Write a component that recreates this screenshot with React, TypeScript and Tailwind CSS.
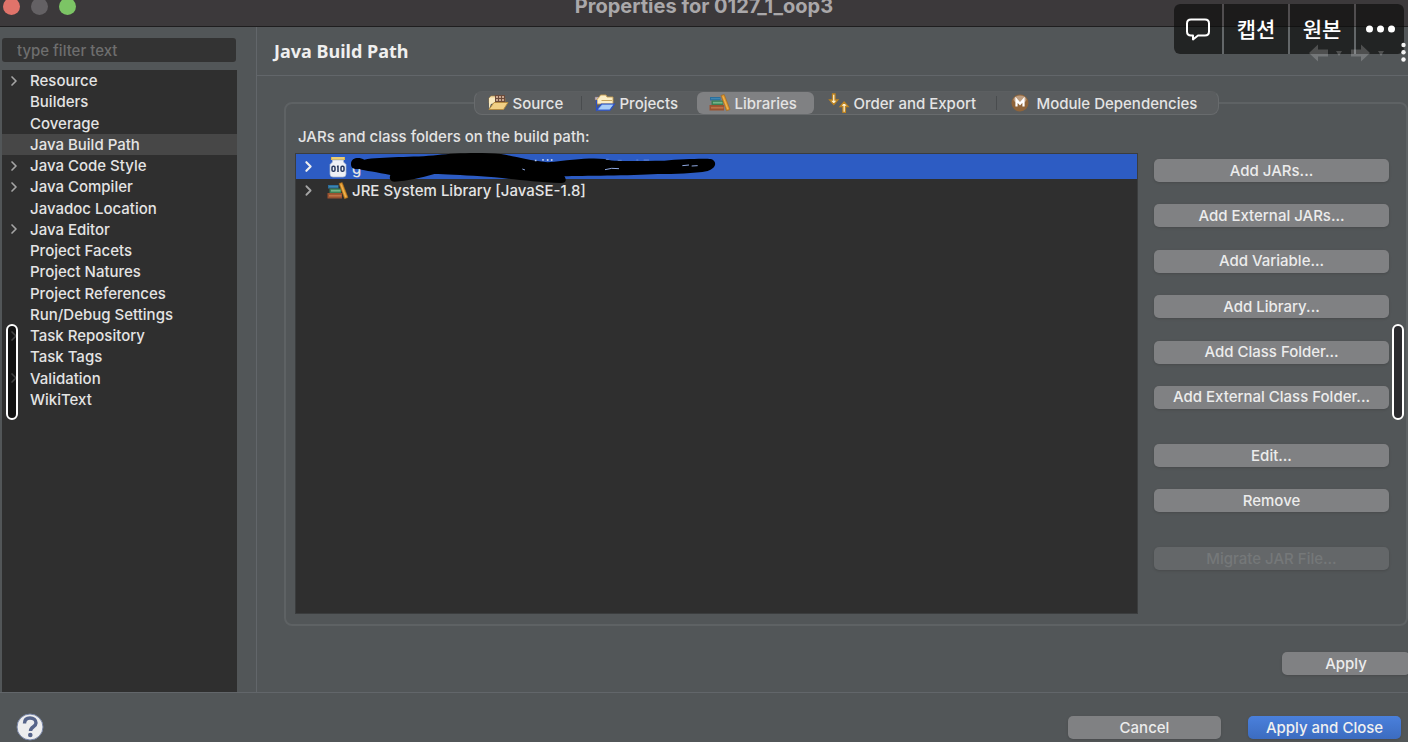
import React from "react";
import { ChevronRight } from "lucide-react";

const treeItems: { label: string; expandable?: boolean; selected?: boolean }[] = [
  { label: "Resource", expandable: true },
  { label: "Builders" },
  { label: "Coverage" },
  { label: "Java Build Path", selected: true },
  { label: "Java Code Style", expandable: true },
  { label: "Java Compiler", expandable: true },
  { label: "Javadoc Location" },
  { label: "Java Editor", expandable: true },
  { label: "Project Facets" },
  { label: "Project Natures" },
  { label: "Project References" },
  { label: "Run/Debug Settings" },
  { label: "Task Repository", expandable: true },
  { label: "Task Tags" },
  { label: "Validation", expandable: true },
  { label: "WikiText" },
];

function SourceIcon() {
  return (
    <svg width="22" height="18" viewBox="0 0 22 18" aria-hidden="true">
      <path d="M2 4 L4 2 H8 L9 4 H18 V9 H2Z" fill="#f3dca8" stroke="#a8813f" strokeWidth="0.6" />
      <path d="M8 1h10v8H8z" fill="#6b4a3a" />
      <path d="M9 2h2v2H9zM12 2h2v2h-2zM15 2h2v2h-2zM9 5h2v2H9zM12 5h2v2h-2zM15 5h2v2h-2z" fill="#c7a58d" />
      <path d="M2 4h6v5l-4 1-2 5z" fill="#f9e9bf" />
      <path d="M2 15.500 L7 8.500 H21 L16.500 15.500Z" fill="#f1cf85" stroke="#b58a3c" strokeWidth="0.900" />
    </svg>
  );
}

function ProjectsIcon() {
  return (
    <svg width="22" height="18" viewBox="0 0 22 18" aria-hidden="true">
      <path d="M1 3h5v3H1z" fill="#b9b4c4" stroke="#8a6d6d" strokeWidth="0.500" />
      <path d="M3 5 L5 3.500 6.500 1 H12 L13 3 H19 V10 H3Z" fill="#fbeec6" stroke="#c39a4f" strokeWidth="0.900" />
      <path d="M7.500 6.500H18" stroke="#c9a45c" strokeWidth="1" />
      <path d="M2.500 6v10 L7.500 10 H20.500 L16 16.200H2.500" fill="#8db9f3" stroke="#2c50c4" strokeWidth="1.200" />
      <path d="M5 15.200 L8.500 11 H18.500 L15.500 15.200Z" fill="#a9cdf8" />
    </svg>
  );
}

function LibraryIcon() {
  return (
    <svg width="22" height="18" viewBox="0 0 22 18" aria-hidden="true">
      <path d="M1 3h10.500v3.500H1z" fill="#2a6f9d" />
      <path d="M2 4.700h9" stroke="#4b93bd" strokeWidth="0.800" />
      <path d="M2.500 6.500H14V11H2.500z" fill="#3b7f55" />
      <path d="M4 8.700h9.500" stroke="#74b489" strokeWidth="1.800" />
      <path d="M0.500 11H15v5.500H0.500z" fill="#9a5230" />
      <path d="M2 13.700h12.500" stroke="#bd7448" strokeWidth="1.800" />
      <path d="M12 1.500 L15.200 0.500 L21 15.500 L17.600 16.700Z" fill="#e0982f" stroke="#9c6319" strokeWidth="0.600" />
      <path d="M14 2.500 L18.800 15" stroke="#f0b95a" strokeWidth="0.900" />
    </svg>
  );
}

function OrderIcon() {
  return (
    <svg width="22" height="20" viewBox="0 0 22 20" aria-hidden="true">
      <path d="M4.500 1 H7 V7 H9.800 L5.750 11.500 L1.700 7 H4.500Z" fill="#fff4d4" stroke="#bd8320" strokeWidth="1.300" />
      <path d="M14.900 19.300 H17.400 V13.500 H20.200 L16.100 9 L12.100 13.500 H14.900Z" fill="#fff4d4" stroke="#bd8320" strokeWidth="1.300" />
    </svg>
  );
}

function ModuleIcon() {
  return (
    <svg width="18" height="18" viewBox="0 0 18 18" aria-hidden="true">
      <circle cx="9" cy="9" r="8.500" fill="#8f643a" />
      <ellipse cx="9" cy="5.500" rx="6.500" ry="4" fill="#bd9d80" />
      <path d="M5.500 12.500V5.800L9 9.800l3.500-4v6.700" fill="none" stroke="#fff" strokeWidth="2.200" />
    </svg>
  );
}

function JarIcon() {
  return (
    <svg width="20" height="22" viewBox="0 0 20 22" aria-hidden="true">
      <path d="M3 1h14v3H3z" fill="#dcb64f" />
      <path d="M4 2h12" stroke="#f7e39c" />
      <path d="M4.500 4h11v2l2.500 2.500V18q0 3-3 3H5q-3 0-3-3V8.500L4.500 6z" fill="#eef1f6" stroke="#a9b7cf" strokeWidth="0.700" />
      <rect x="4" y="10.300" width="3" height="5" rx="1.300" fill="none" stroke="#26375c" strokeWidth="1.500" />
      <path d="M10 9.500V16M8.900 10.500h1" stroke="#26375c" strokeWidth="1.500" />
      <rect x="13" y="10.300" width="3" height="5" rx="1.300" fill="none" stroke="#26375c" strokeWidth="1.500" />
    </svg>
  );
}

function Scribble() {
  return (
    <svg className="pointer-events-none absolute -top-px left-[55px] z-10" width="368" height="31" viewBox="210 102 1104 93" aria-hidden="true">
      <path
        d="M210 135C210 115 235 114 250 122C300 112 400 116 470 108C520 102 600 100 660 105C700 112 740 124 800 130C870 122 930 115 970 120C1000 130 1080 125 1150 125C1200 120 1270 118 1290 120C1308 126 1308 146 1280 156C1240 164 1180 165 1130 165C1050 170 900 170 850 172C858 184 855 192 840 192C740 188 660 175 600 172C540 168 490 165 460 165C420 176 380 186 340 188C325 186 325 175 328 168C290 160 250 155 235 150C215 152 210 145 210 135Z"
        fill="#000"
      />
      <path d="M764 122v5M786 120v5M800 120v6M812 120v6" stroke="#b9c9ee" strokeWidth="5" />
      <path d="M724 150l8 3M972 152l20-4 22 1M1204 140l20-2M1232 141l18-1" stroke="#8fa9e2" strokeWidth="3" />
      <path d="M975 121h8M1010 124h12M1066 123h6M1088 123h16" stroke="#7f9bdc" strokeWidth="2" />
    </svg>
  );
}

const buttonBase = "flex h-[23px] items-center justify-center whitespace-nowrap rounded-[5px] pb-px text-[15px] leading-none font-medium shadow-sm";

function PushButton({ children, className = "", disabled = false }: { children: React.ReactNode; className?: string; disabled?: boolean }) {
  return (
    <button type="button" disabled={disabled} className={`${buttonBase} ${disabled ? "bg-[#646769] text-[#757879]" : "bg-[#808183] text-[#ececec]"} ${className}`}>
      {children}
    </button>
  );
}

function Tab({ icon, label, className, selected = false }: { icon: React.ReactNode; label: string; className: string; selected?: boolean }) {
  return (
    <button type="button" role="tab" aria-selected={selected} className={`flex items-center whitespace-nowrap ${selected ? "rounded-md bg-[#808183]" : ""} ${className}`}>
      {icon}
      {label}
    </button>
  );
}

function NavArrow({ back = false }: { back?: boolean }) {
  return (
    <button type="button" aria-label={back ? "Back" : "Forward"} className="flex items-center gap-2 text-white/20">
      <svg width="19" height="18" viewBox="0 0 19 18" className={back ? "" : "rotate-180"} aria-hidden="true">
        <path d="M0 9L9 0.500V5.500H19V12.500H9V17.500Z" fill="currentColor" />
      </svg>
      <svg width="6" height="5" viewBox="0 0 6 5" aria-hidden="true">
        <path d="M0 0h6L3 5z" fill="currentColor" />
      </svg>
    </button>
  );
}

export default function App() {
  return (
    <div className="relative flex min-h-screen flex-col overflow-hidden bg-[#525658] font-['Inter',sans-serif] text-[15px] leading-none font-medium text-[#e4e4e4]">
      <header className="relative flex h-[27px] shrink-0 justify-center border-b border-[#1f1e1f] bg-[#3c393b]">
        <div className="absolute -top-0.5 left-[3px] flex gap-[11px]">
          <button type="button" aria-label="Close window" className="size-[17px] rounded-full bg-[#e0736a]" />
          <button type="button" aria-label="Minimize window" className="size-[17px] rounded-full bg-[#646164]" />
          <button type="button" aria-label="Zoom window" className="size-[17px] rounded-full bg-[#7cc465]" />
        </div>
        <h1 className="-mt-1 text-xl leading-5 font-bold text-[#aaa8aa]">Properties for 0127_1_oop3</h1>
      </header>

      <div className="flex flex-1">
        <aside className="flex w-[257px] shrink-0 flex-col border-r border-[#62666a] pr-[19px] pl-0.5">
          <input
            type="text"
            aria-label="Filter"
            placeholder="type filter text"
            className="mt-[11px] mr-px h-6 rounded-[3px] bg-[#333333] px-[15px] outline-none placeholder:text-[#6e6e6e]"
          />
          <nav className="mt-2 flex-1 bg-[#2f2f2f]">
            <ul className="grid h-[340px] auto-rows-fr">
              {treeItems.map((item) => (
                <li key={item.label} className={`flex items-center ${item.selected ? "bg-[#474747]" : ""}`}>
                  <span className="flex w-7 justify-center pr-1">
                    {item.expandable && <ChevronRight size={16} strokeWidth={2.5} className="text-[#a5a5a5]" />}
                  </span>
                  <a href="#" className="whitespace-nowrap">{item.label}</a>
                </li>
              ))}
            </ul>
          </nav>
        </aside>

        <main className="flex min-w-0 flex-1 flex-col">
          <div className="flex h-[49px] shrink-0 items-center justify-between border-b border-[#62666a] pr-6 pl-[17px]">
            <h2 className="font-['Noto_Sans',sans-serif] text-lg font-bold text-[#efefef]">Java Build Path</h2>
            <div className="relative z-20 flex gap-[9px] pt-1">
              <NavArrow back />
              <NavArrow />
            </div>
          </div>

          <section className="mt-[26px] ml-[27px] flex flex-1 flex-col rounded-lg border-2 border-[#5e6264]">
            <div role="tablist" className="z-10 -mt-[13px] flex h-6 self-center rounded-lg border border-[#686b6d] border-t-[#5c5f61] bg-[#5a5d5f]">
              <Tab icon={<SourceIcon />} label="Source" className="w-[106px] gap-1 pl-3" />
              <span className="my-1 w-px bg-[#494c4e]" />
              <Tab icon={<ProjectsIcon />} label="Projects" className="w-[115px] gap-1 pl-3" />
              <Tab icon={<LibraryIcon />} label="Libraries" className="w-[117px] gap-1 pl-3" selected />
              <Tab icon={<OrderIcon />} label="Order and Export" className="w-[182px] gap-1 pl-3.5" />
              <span className="my-1 w-px bg-[#494c4e]" />
              <Tab icon={<ModuleIcon />} label="Module Dependencies" className="w-[221px] gap-2 pl-3.5" />
            </div>

            <div className="flex flex-1 gap-4 pr-[17px] pb-[10px] pl-[9px]">
              <div className="flex min-w-0 flex-1 flex-col">
                <h3 className="flex h-[38px] items-center pt-1 pl-[3px]">JARs and class folders on the build path:</h3>
                <ul className="flex-1 border border-[#3b3d3e] bg-[#2f2f2f]">
                  <li className="relative flex h-[25px] items-center bg-[#2d5cc3] pl-1">
                    <ChevronRight size={17} strokeWidth={3} className="mr-[11px] text-[#eeeeee]" />
                    <JarIcon />
                    <span className="ml-1 pt-1">g</span>
                    <Scribble />
                  </li>
                  <li className="flex h-[23px] items-center pl-1">
                    <ChevronRight size={17} strokeWidth={2.5} className="mr-[10px] text-[#a5a5a5]" />
                    <LibraryIcon />
                    <span className="ml-[3px] whitespace-nowrap">JRE System Library [JavaSE-1.8]</span>
                  </li>
                </ul>
              </div>

              <div className="flex w-[235px] shrink-0 flex-col gap-[35px] pt-11">
                <div className="flex h-[250px] flex-col justify-between">
                  <PushButton>Add JARs...</PushButton>
                  <PushButton>Add External JARs...</PushButton>
                  <PushButton>Add Variable...</PushButton>
                  <PushButton>Add Library...</PushButton>
                  <PushButton>Add Class Folder...</PushButton>
                  <PushButton>Add External Class Folder...</PushButton>
                </div>
                <div className="flex flex-col gap-[22px]">
                  <PushButton>Edit...</PushButton>
                  <PushButton>Remove</PushButton>
                </div>
                <PushButton disabled>Migrate JAR File...</PushButton>
              </div>
            </div>
          </section>

          <div className="-mr-0.5 flex h-[66px] shrink-0 justify-end pt-[26px]">
            <PushButton className="w-32">Apply</PushButton>
          </div>
        </main>
      </div>

      <footer className="flex h-[50px] shrink-0 items-start border-t border-[#62666a] pr-[7px] pl-4">
        <button type="button" aria-label="Help" className="mt-5">
          <svg width="28" height="28" viewBox="0 0 28 28" aria-hidden="true">
            <circle cx="14" cy="14" r="13" fill="#ededee" stroke="#7583a5" strokeWidth="1" />
            <path d="M8.500 10.500C8.500 6.500 11 5 14 5C17.500 5 20 7 20 10C20 14 14.500 13.500 14.500 18" fill="none" stroke="#56648a" strokeWidth="3.400" />
            <circle cx="14.300" cy="22" r="2.300" fill="#56648a" />
          </svg>
        </button>
        <div className="ml-auto flex gap-[27px] pt-[23px]">
          <PushButton className="w-[153px]">Cancel</PushButton>
          <button type="button" className={`${buttonBase} w-[153px] bg-linear-to-b from-[#4a80dc] to-[#3c6cc0] text-[#f0f0f0]`}>
            Apply and Close
          </button>
        </div>
      </footer>

      <div className="absolute top-1 right-1 z-10 flex h-[50px] gap-0.5 overflow-hidden rounded-md bg-white/10 font-['Noto_Sans_CJK_KR',sans-serif] text-[21px] font-medium text-white">
        <button type="button" aria-label="Comment" className="flex w-12 items-center justify-center bg-black/65">
          <svg width="24" height="23" viewBox="0 0 24 23" fill="none" stroke="currentColor" strokeWidth="2" strokeLinejoin="round" aria-hidden="true">
            <path d="M5 1.500H19Q23 1.500 23 5.500V13.500Q23 17.500 19 17.500H12L7 21.500V17.500H5Q1 17.500 1 13.500V5.500Q1 1.500 5 1.500Z" />
          </svg>
        </button>
        <button type="button" className="w-16 bg-black/65 pb-0.5">캡션</button>
        <button type="button" className="w-16 bg-black/65 pb-0.5">원본</button>
        <button type="button" aria-label="More" className="flex w-12 items-center justify-center bg-black/65">
          <svg width="29" height="8" viewBox="0 0 29 8" fill="currentColor" aria-hidden="true">
            <circle cx="3.500" cy="4" r="3.500" />
            <circle cx="14.500" cy="4" r="3.500" />
            <circle cx="25.500" cy="4" r="3.500" />
          </svg>
        </button>
      </div>
      <button type="button" aria-label="View menu" className="absolute top-[42px] right-0.5 z-20">
        <svg width="5" height="21" viewBox="0 0 5 21" fill="#f4f4f4" aria-hidden="true">
          <circle cx="2.500" cy="3" r="2.200" />
          <circle cx="2.500" cy="10.300" r="2.200" />
          <circle cx="2.500" cy="17.500" r="2.200" />
        </svg>
      </button>
      <div className="absolute top-[324px] left-1.5 h-24 w-3 rounded-md border-2 border-white bg-black/60" />
      <div className="absolute top-[324px] right-1 h-24 w-3 rounded-md border-2 border-white bg-[#2a2a2e]" />
    </div>
  );
}
